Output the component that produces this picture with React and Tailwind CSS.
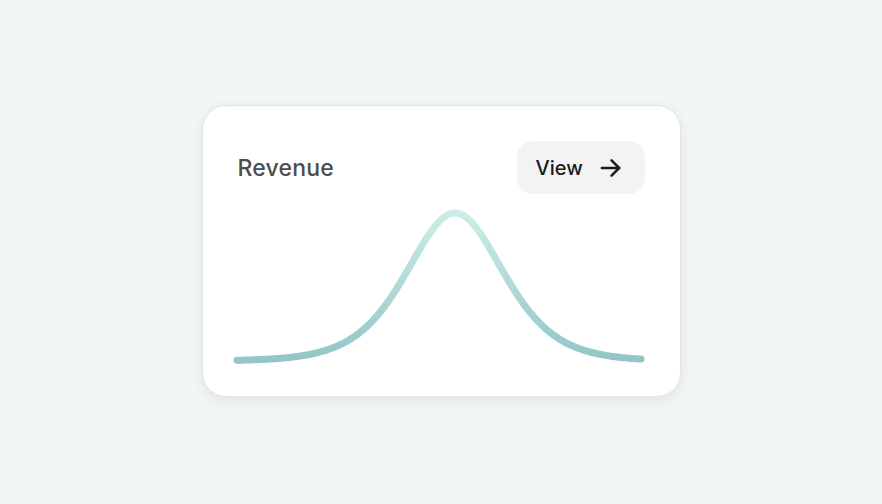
import React from 'react';

function bellPath() {
  const pts = [];
  const peak = 217;
  const w = 65;
  const top = 19;
  const base = 167;
  for (let x = -1; x <= 403; x += 2) {
    const s = 1 / Math.cosh((x - peak) / w);
    const y = base - (base - top) * s * s;
    pts.push(`${x === -1 ? 'M' : 'L'}${x},${y.toFixed(2)}`);
  }
  return pts.join(' ');
}

function App() {
  const d = bellPath();

  return (
    <div
      className="w-full h-[504px] bg-[#f3f6f7] flex items-center justify-center"
      style={{ fontFamily: 'Inter, "Noto Sans", sans-serif' }}
    >
      <div className="w-[479px] h-[292px] -mt-[2px] bg-white rounded-[24px] border border-[#e2e5e7] shadow-[0_4px_14px_rgba(0,0,0,0.08)] px-[35px] pt-[35px] flex flex-col">
        <div className="flex items-center justify-between h-[53px]">
          <span className="text-[23px] font-medium text-[#4d4d4d] tracking-[0.2px] mt-[1px]">Revenue</span>
          <button className="h-[53px] w-[128px] rounded-[16px] bg-[#f3f3f3] flex items-center pl-[19px] gap-[15px] text-[#1c1c1c]">
            <span className="text-[20px] font-medium mt-[1px]">View</span>
            <svg width="26" height="26" viewBox="0 0 24 24" fill="none" stroke="currentColor" strokeWidth="2.3" strokeLinecap="round" strokeLinejoin="round">
              <path d="M3.5 12h16" />
              <path d="M12.5 5l7 7-7 7" />
            </svg>
          </button>
        </div>
        <svg width="406" height="170" viewBox="0 0 406 170" className="overflow-visible">
          <defs>
            <linearGradient id="rev" x1="0" y1="19" x2="0" y2="167" gradientUnits="userSpaceOnUse">
              <stop offset="0" stopColor="#cbede8" />
              <stop offset="1" stopColor="#93c5c7" />
            </linearGradient>
          </defs>
          <path d={d} fill="none" stroke="url(#rev)" strokeWidth="7" strokeLinecap="round" strokeLinejoin="round" />
        </svg>
      </div>
    </div>
  );
}

export default App;
